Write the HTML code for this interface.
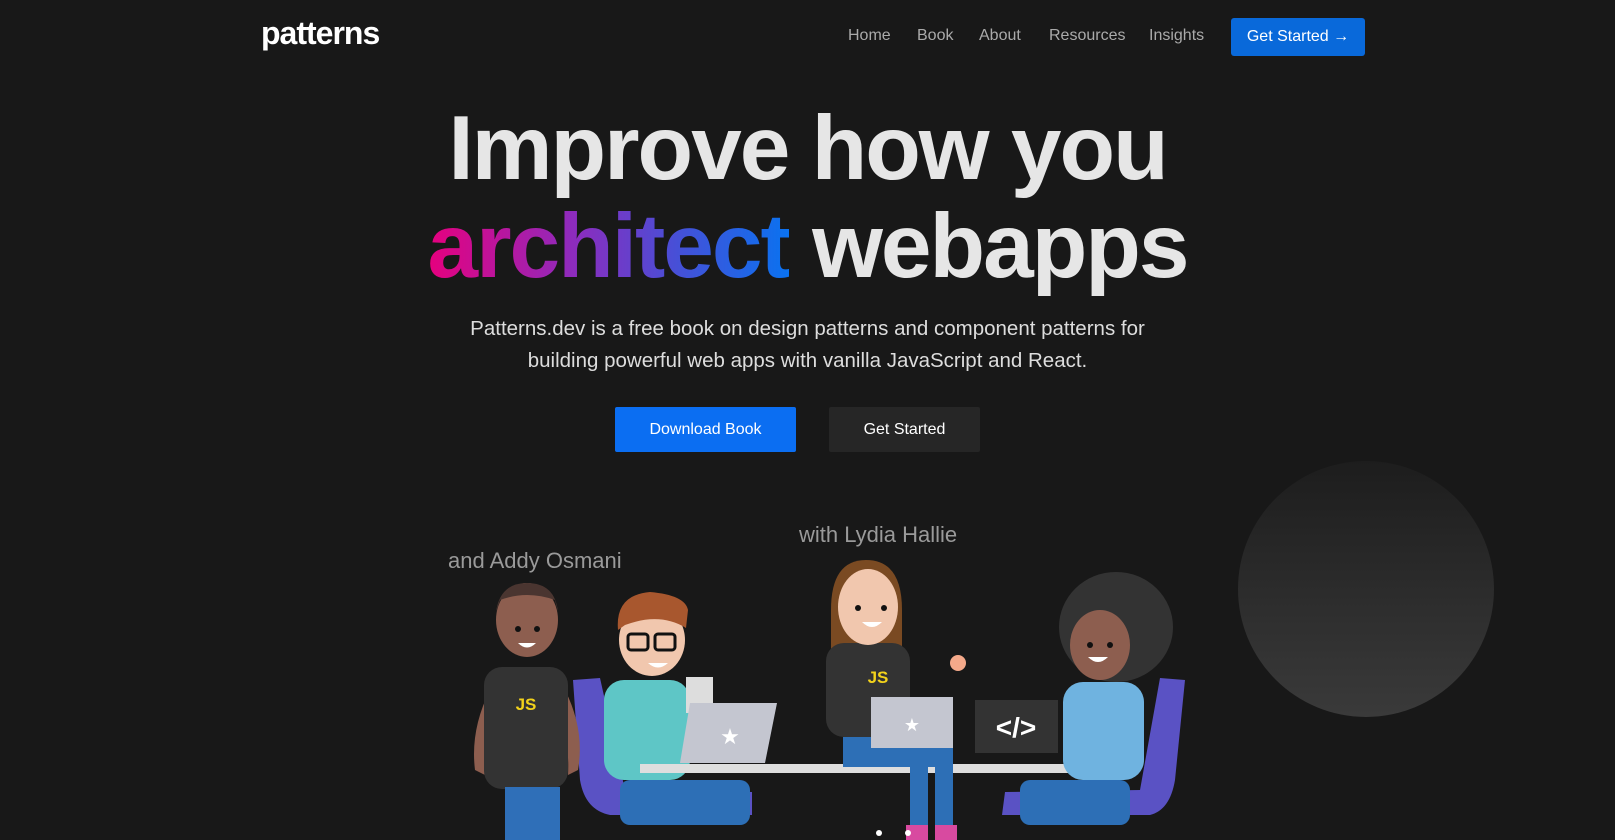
<!DOCTYPE html>
<html><head><meta charset="utf-8"><style>
*{margin:0;padding:0;box-sizing:border-box}
body{width:1615px;height:840px;background:#181818;overflow:hidden;position:relative;font-family:"Liberation Sans",sans-serif;color:#e6e6e6}
.logo{position:absolute;left:261px;top:15px;font-size:32px;font-weight:bold;color:#fff;letter-spacing:-1px}
.nav{position:absolute;top:27px;font-size:16px;color:#aaa}
.btn{position:absolute;left:1231px;top:18px;width:134px;height:38px;background:#0969da;border-radius:3px;color:#fff;font-size:16px;line-height:38px;text-align:center}
h1{position:absolute;left:0;width:1615px;text-align:center;font-size:91px;font-weight:bold;letter-spacing:-2px;color:#e6e6e6;line-height:90px}
.grad{background:linear-gradient(90deg,#e6007e,#8e2bbd 40%,#4451d8 70%,#0a72f0);-webkit-background-clip:text;background-clip:text;color:transparent}
p.sub{position:absolute;top:313px;left:0;width:1615px;text-align:center;font-size:20.5px;line-height:32px;color:#ddd}
.b1{position:absolute;left:615px;top:407px;width:181px;height:45px;background:#0b6ef2;border-radius:2px;color:#fff;font-size:16px;line-height:45px;text-align:center}
.b2{position:absolute;left:829px;top:407px;width:151px;height:45px;background:#262626;border-radius:2px;color:#fff;font-size:16px;line-height:45px;text-align:center}
.lbl{position:absolute;font-size:22px;color:#9a9a9a}
.circ{position:absolute;left:1238px;top:461px;width:256px;height:256px;border-radius:50%;background:linear-gradient(180deg,#1d1d1d,#3a3a3a)}
</style></head><body>
<div class="logo">patterns</div>
<div class="nav" style="left:848px">Home</div>
<div class="nav" style="left:917px">Book</div>
<div class="nav" style="left:979px">About</div>
<div class="nav" style="left:1049px">Resources</div>
<div class="nav" style="left:1149px">Insights</div>
<div class="btn">Get Started →</div>
<h1 style="top:104px">Improve how you</h1>
<h1 style="top:202px"><span class="grad">architect</span> webapps</h1>
<p class="sub">Patterns.dev is a free book on design patterns and component patterns for<br>building powerful web apps with vanilla JavaScript and React.</p>
<div class="b1">Download Book</div>
<div class="b2">Get Started</div>
<div class="circ"></div>
<div class="lbl" style="left:448px;top:548px">and Addy Osmani</div>
<div class="lbl" style="left:799px;top:522px">with Lydia Hallie</div>
<svg style="position:absolute;left:0;top:0" width="1615" height="840" viewBox="0 0 1615 840">
<path d="M573 680 L600 678 L625 790 L752 792 L752 815 L610 815 Q585 810 580 780 Z" fill="#5a52c4"/>
<rect x="630" y="815" width="60" height="10" fill="#333"/>
<path d="M1185 680 L1160 678 L1140 790 L1005 792 L1002 815 L1150 815 Q1170 810 1175 780 Z" fill="#5a52c4"/>
<path d="M490 690 Q470 730 475 770 L485 775 Q485 735 500 705Z M565 690 Q585 730 578 770 L568 775 Q570 735 555 705Z" fill="#8d5e4f"/>
<rect x="484" y="667" width="84" height="122" rx="18" fill="#333"/>
<text x="526" y="710" font-family="Liberation Sans" font-weight="bold" font-size="17" fill="#f2d21b" text-anchor="middle">JS</text>
<rect x="505" y="787" width="55" height="53" fill="#2f6fb8"/>
<ellipse cx="527" cy="620" rx="31" ry="37" fill="#8d5e4f"/>
<path d="M496 612 Q500 583 527 583 Q555 583 558 612 L555 600 Q527 590 500 600Z" fill="#4a3530"/>
<circle cx="518" cy="629" r="3" fill="#111"/><circle cx="537" cy="629" r="3" fill="#111"/>
<path d="M518 643 Q527 652 536 643Z" fill="#fff"/>
<rect x="604" y="680" width="86" height="100" rx="20" fill="#5ec6c6"/>
<rect x="620" y="780" width="130" height="45" rx="10" fill="#2d6fb6"/>
<ellipse cx="652" cy="640" rx="33" ry="36" fill="#f1c7ae"/>
<path d="M618 630 Q615 595 650 592 Q685 595 688 610 L686 628 Q660 612 625 625Z" fill="#a8572e"/>
<rect x="628" y="634" width="20" height="16" rx="3" fill="none" stroke="#111" stroke-width="3"/>
<rect x="655" y="634" width="20" height="16" rx="3" fill="none" stroke="#111" stroke-width="3"/>
<path d="M648 663 Q658 672 668 663Z" fill="#fff"/>
<rect x="686" y="677" width="27" height="36" fill="#ddd"/>
<path d="M690 703 L777 703 L765 763 L680 763Z" fill="#c4c6d0"/>
<text x="730" y="744" font-size="22" fill="#fff" text-anchor="middle">★</text>
<rect x="640" y="764" width="432" height="9" fill="#dedede"/>
<path d="M831 610 Q831 560 866 560 Q902 560 902 610 L902 687 L831 687Z" fill="#7a4a22"/>
<rect x="826" y="643" width="84" height="94" rx="18" fill="#333"/>
<text x="878" y="683" font-family="Liberation Sans" font-weight="bold" font-size="17" fill="#f2d21b" text-anchor="middle">JS</text>
<ellipse cx="868" cy="607" rx="30" ry="38" fill="#f1c7ae"/>
<circle cx="858" cy="608" r="3" fill="#111"/><circle cx="884" cy="608" r="3" fill="#111"/>
<path d="M862 622 Q872 632 882 622Z" fill="#fff"/>
<rect x="843" y="737" width="110" height="30" fill="#2d6fb6"/>
<rect x="910" y="767" width="18" height="65" fill="#2d6fb6"/><rect x="935" y="767" width="18" height="65" fill="#2d6fb6"/>
<rect x="906" y="825" width="22" height="15" fill="#d84aa0"/><rect x="935" y="825" width="22" height="15" fill="#d84aa0"/>
<circle cx="958" cy="663" r="8" fill="#f4a98a"/>
<path d="M871 697 L953 697 L953 748 L871 748Z" fill="#c4c6d0"/>
<text x="912" y="731" font-size="18" fill="#fff" text-anchor="middle">★</text>
<ellipse cx="1116" cy="627" rx="57" ry="55" fill="#333"/>
<rect x="1063" y="682" width="81" height="98" rx="20" fill="#6fb3e0"/>
<rect x="1020" y="780" width="110" height="45" rx="10" fill="#2d6fb6"/>
<ellipse cx="1100" cy="645" rx="30" ry="35" fill="#8d5e4f"/>
<circle cx="1090" cy="645" r="3" fill="#111"/><circle cx="1110" cy="645" r="3" fill="#111"/>
<path d="M1088 657 Q1098 667 1108 657Z" fill="#fff"/>
<rect x="975" y="700" width="83" height="53" fill="#333"/>
<text x="1016" y="737" font-family="Liberation Sans" font-weight="bold" font-size="28" fill="#fff" text-anchor="middle">&lt;/&gt;</text>
<circle cx="879" cy="833" r="3" fill="#fff"/><circle cx="908" cy="833" r="3" fill="#fff"/>
</svg>
</body></html>
